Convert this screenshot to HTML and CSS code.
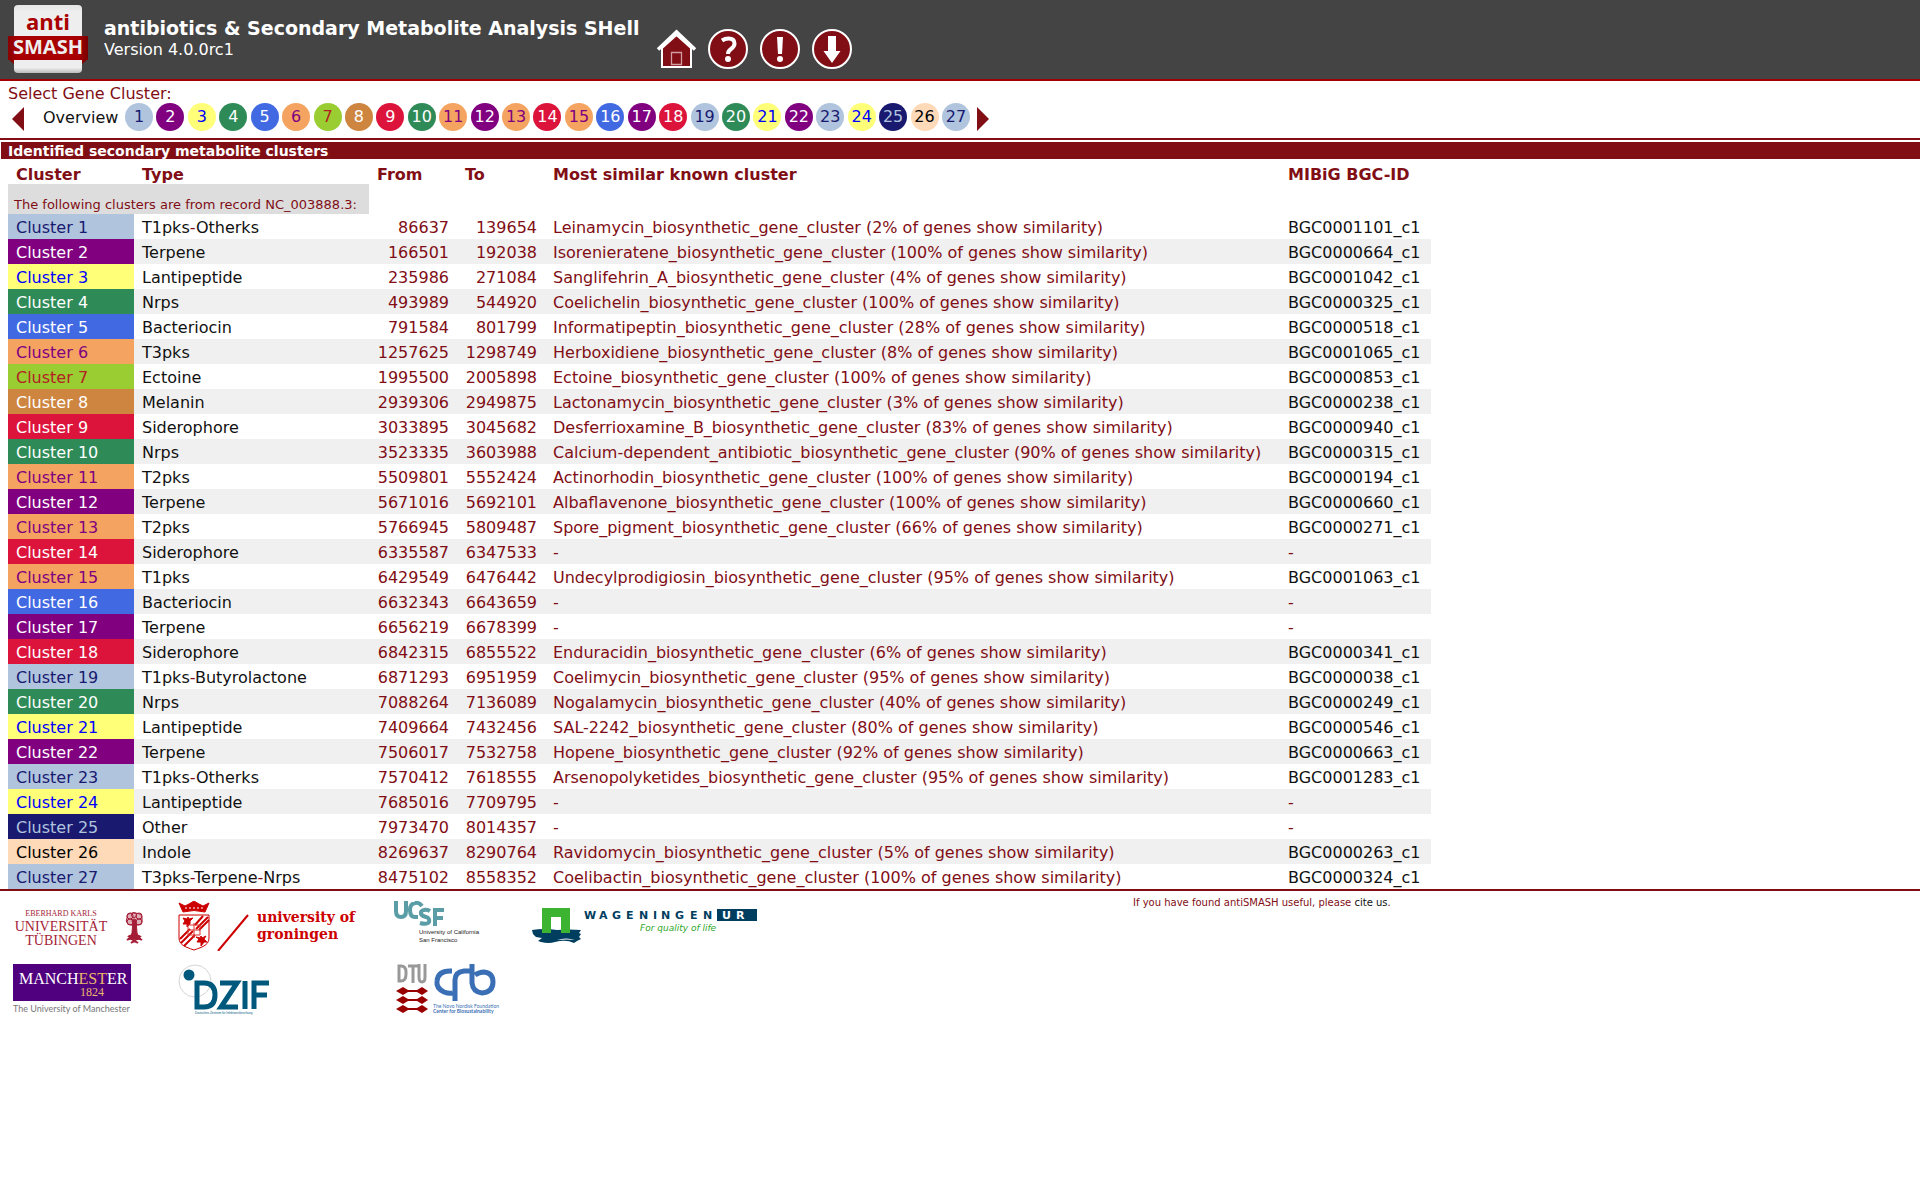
FILE: index.html
```html
<!DOCTYPE html>
<html lang="en">
<head>
<meta charset="utf-8">
<title>NC_003888.3 - antiSMASH results</title>
<link rel="stylesheet" href="styles.css">
</head>
<body>
<header class="top">
  <a class="logo" href="#home" aria-label="antiSMASH">
    <svg width="80" height="70" viewBox="0 0 80 70">
      <defs>
        <linearGradient id="card" x1="0" y1="0" x2="0" y2="1"><stop offset="0" stop-color="#e4e4e4"/><stop offset=".1" stop-color="#eee"/><stop offset=".92" stop-color="#eee"/><stop offset="1" stop-color="#bbb"/></linearGradient>
        <linearGradient id="band" x1="0" y1="0" x2="1" y2="0"><stop offset="0" stop-color="#800"/><stop offset=".12" stop-color="#a80000"/><stop offset=".88" stop-color="#a80000"/><stop offset="1" stop-color="#700"/></linearGradient>
      </defs>
      <path d="M0 54h80l-6 5H6z" fill="#800"/>
      <rect x="6" y="0" width="68" height="68" rx="4" fill="url(#card)"/>
      <rect x="0" y="31" width="80" height="24" fill="url(#band)"/>
      <text class="logo-anti" x="40" y="25" text-anchor="middle">anti</text>
      <text class="logo-smash" x="40" y="49" text-anchor="middle">SMASH</text>
    </svg>
  </a>
  <div class="titles">
    <h1>antibiotics &amp; Secondary Metabolite Analysis SHell</h1>
    <p>Version 4.0.0rc1</p>
  </div>
  <nav class="icons" aria-label="Site">
    <a href="#home" aria-label="Home"><svg width="40" height="40" viewBox="0 0 40 40"><path d="M6 19v19h29V19L20.500 6z" fill="#810e15" stroke="#fff" stroke-width="2"/><path d="M2 20.500L20.500 3 39 20.500" fill="none" stroke="#fff" stroke-width="3.500"/><path d="M15.500 23.500h10v12h-10z" fill="none" stroke="#d09ea1" stroke-width="1.300"/></svg></a>
    <a href="#help" aria-label="Help"><svg width="40" height="40" viewBox="0 0 40 40"><circle cx="20" cy="20" r="19" fill="#810e15" stroke="#fff" stroke-width="2"/><path d="M14 11.500q3-2 6.500-2 6 0 6 5 0 3-3.500 5.500-3 2-3 5" fill="none" stroke="#fff" stroke-width="4"/><circle cx="20" cy="30" r="3" fill="#fff"/></svg></a>
    <a href="#about" aria-label="About"><svg width="40" height="40" viewBox="0 0 40 40"><circle cx="20" cy="20" r="19" fill="#810e15" stroke="#fff" stroke-width="2"/><path d="M17 8h6l-1 17h-4z" fill="#fff"/><circle cx="20" cy="30" r="3" fill="#fff"/></svg></a>
    <a href="#download" aria-label="Download"><svg width="40" height="40" viewBox="0 0 40 40"><circle cx="20" cy="20" r="19" fill="#810e15" stroke="#fff" stroke-width="2"/><path d="M16 7h8v15h4.500L20 34l-8.500-12H16z" fill="#fff"/></svg></a>
  </nav>
</header>

<nav class="picker" aria-label="Gene clusters">
  <div class="picker-label">Select Gene Cluster:</div>
  <div class="picker-row">
    <a class="arrow" href="#prev" aria-label="Previous"><svg width="12" height="24" viewBox="0 0 12 24"><path d="M12 0v24L0 12z" fill="#810e15"/></svg></a>
    <a class="overview" href="#overview">Overview</a>
    <div class="dots">
      <a class="dot hybrid" href="#c1">1</a><a class="dot terpene" href="#c2">2</a><a class="dot lanti" href="#c3">3</a><a class="dot nrps" href="#c4">4</a><a class="dot bact" href="#c5">5</a><a class="dot pks" href="#c6">6</a><a class="dot ectoine" href="#c7">7</a><a class="dot melanin" href="#c8">8</a><a class="dot sidero" href="#c9">9</a><a class="dot nrps" href="#c10">10</a><a class="dot pks" href="#c11">11</a><a class="dot terpene" href="#c12">12</a><a class="dot pks" href="#c13">13</a><a class="dot sidero" href="#c14">14</a><a class="dot pks" href="#c15">15</a><a class="dot bact" href="#c16">16</a><a class="dot terpene" href="#c17">17</a><a class="dot sidero" href="#c18">18</a><a class="dot hybrid" href="#c19">19</a><a class="dot nrps" href="#c20">20</a><a class="dot lanti" href="#c21">21</a><a class="dot terpene" href="#c22">22</a><a class="dot hybrid" href="#c23">23</a><a class="dot lanti" href="#c24">24</a><a class="dot other" href="#c25">25</a><a class="dot indole" href="#c26">26</a><a class="dot hybrid" href="#c27">27</a>
    </div>
    <a class="arrow" href="#next" aria-label="Next"><svg width="12" height="24" viewBox="0 0 12 24"><path d="M0 0v24l12-12z" fill="#810e15"/></svg></a>
  </div>
</nav>

<main>
<h2 class="band">Identified secondary metabolite clusters</h2>
<table class="clusters">
<colgroup><col class="w-cluster"><col class="w-type"><col class="w-num"><col class="w-num"><col class="w-known"><col class="w-id"></colgroup>
<thead><tr><th>Cluster</th><th>Type</th><th>From</th><th>To</th><th>Most similar known cluster</th><th>MIBiG BGC-ID</th></tr></thead>
<tbody>
<tr class="record"><td colspan="2">The following clusters are from record NC_003888.3:</td></tr>
<tr><td class="hybrid"><a href="#c1">Cluster 1</a></td><td><a href="#t">T1pks</a>-<a href="#t">Otherks</a></td><td>86637</td><td>139654</td><td>Leinamycin_biosynthetic_gene_cluster (2% of genes show similarity)</td><td><a href="#m">BGC0001101_c1</a></td></tr>
<tr><td class="terpene"><a href="#c2">Cluster 2</a></td><td><a href="#t">Terpene</a></td><td>166501</td><td>192038</td><td>Isorenieratene_biosynthetic_gene_cluster (100% of genes show similarity)</td><td><a href="#m">BGC0000664_c1</a></td></tr>
<tr><td class="lanti"><a href="#c3">Cluster 3</a></td><td><a href="#t">Lantipeptide</a></td><td>235986</td><td>271084</td><td>Sanglifehrin_A_biosynthetic_gene_cluster (4% of genes show similarity)</td><td><a href="#m">BGC0001042_c1</a></td></tr>
<tr><td class="nrps"><a href="#c4">Cluster 4</a></td><td><a href="#t">Nrps</a></td><td>493989</td><td>544920</td><td>Coelichelin_biosynthetic_gene_cluster (100% of genes show similarity)</td><td><a href="#m">BGC0000325_c1</a></td></tr>
<tr><td class="bact"><a href="#c5">Cluster 5</a></td><td><a href="#t">Bacteriocin</a></td><td>791584</td><td>801799</td><td>Informatipeptin_biosynthetic_gene_cluster (28% of genes show similarity)</td><td><a href="#m">BGC0000518_c1</a></td></tr>
<tr><td class="pks"><a href="#c6">Cluster 6</a></td><td><a href="#t">T3pks</a></td><td>1257625</td><td>1298749</td><td>Herboxidiene_biosynthetic_gene_cluster (8% of genes show similarity)</td><td><a href="#m">BGC0001065_c1</a></td></tr>
<tr><td class="ectoine"><a href="#c7">Cluster 7</a></td><td><a href="#t">Ectoine</a></td><td>1995500</td><td>2005898</td><td>Ectoine_biosynthetic_gene_cluster (100% of genes show similarity)</td><td><a href="#m">BGC0000853_c1</a></td></tr>
<tr><td class="melanin"><a href="#c8">Cluster 8</a></td><td><a href="#t">Melanin</a></td><td>2939306</td><td>2949875</td><td>Lactonamycin_biosynthetic_gene_cluster (3% of genes show similarity)</td><td><a href="#m">BGC0000238_c1</a></td></tr>
<tr><td class="sidero"><a href="#c9">Cluster 9</a></td><td><a href="#t">Siderophore</a></td><td>3033895</td><td>3045682</td><td>Desferrioxamine_B_biosynthetic_gene_cluster (83% of genes show similarity)</td><td><a href="#m">BGC0000940_c1</a></td></tr>
<tr><td class="nrps"><a href="#c10">Cluster 10</a></td><td><a href="#t">Nrps</a></td><td>3523335</td><td>3603988</td><td>Calcium-dependent_antibiotic_biosynthetic_gene_cluster (90% of genes show similarity)</td><td><a href="#m">BGC0000315_c1</a></td></tr>
<tr><td class="pks"><a href="#c11">Cluster 11</a></td><td><a href="#t">T2pks</a></td><td>5509801</td><td>5552424</td><td>Actinorhodin_biosynthetic_gene_cluster (100% of genes show similarity)</td><td><a href="#m">BGC0000194_c1</a></td></tr>
<tr><td class="terpene"><a href="#c12">Cluster 12</a></td><td><a href="#t">Terpene</a></td><td>5671016</td><td>5692101</td><td>Albaflavenone_biosynthetic_gene_cluster (100% of genes show similarity)</td><td><a href="#m">BGC0000660_c1</a></td></tr>
<tr><td class="pks"><a href="#c13">Cluster 13</a></td><td><a href="#t">T2pks</a></td><td>5766945</td><td>5809487</td><td>Spore_pigment_biosynthetic_gene_cluster (66% of genes show similarity)</td><td><a href="#m">BGC0000271_c1</a></td></tr>
<tr><td class="sidero"><a href="#c14">Cluster 14</a></td><td><a href="#t">Siderophore</a></td><td>6335587</td><td>6347533</td><td>-</td><td>-</td></tr>
<tr><td class="pks"><a href="#c15">Cluster 15</a></td><td><a href="#t">T1pks</a></td><td>6429549</td><td>6476442</td><td>Undecylprodigiosin_biosynthetic_gene_cluster (95% of genes show similarity)</td><td><a href="#m">BGC0001063_c1</a></td></tr>
<tr><td class="bact"><a href="#c16">Cluster 16</a></td><td><a href="#t">Bacteriocin</a></td><td>6632343</td><td>6643659</td><td>-</td><td>-</td></tr>
<tr><td class="terpene"><a href="#c17">Cluster 17</a></td><td><a href="#t">Terpene</a></td><td>6656219</td><td>6678399</td><td>-</td><td>-</td></tr>
<tr><td class="sidero"><a href="#c18">Cluster 18</a></td><td><a href="#t">Siderophore</a></td><td>6842315</td><td>6855522</td><td>Enduracidin_biosynthetic_gene_cluster (6% of genes show similarity)</td><td><a href="#m">BGC0000341_c1</a></td></tr>
<tr><td class="hybrid"><a href="#c19">Cluster 19</a></td><td><a href="#t">T1pks</a>-<a href="#t">Butyrolactone</a></td><td>6871293</td><td>6951959</td><td>Coelimycin_biosynthetic_gene_cluster (95% of genes show similarity)</td><td><a href="#m">BGC0000038_c1</a></td></tr>
<tr><td class="nrps"><a href="#c20">Cluster 20</a></td><td><a href="#t">Nrps</a></td><td>7088264</td><td>7136089</td><td>Nogalamycin_biosynthetic_gene_cluster (40% of genes show similarity)</td><td><a href="#m">BGC0000249_c1</a></td></tr>
<tr><td class="lanti"><a href="#c21">Cluster 21</a></td><td><a href="#t">Lantipeptide</a></td><td>7409664</td><td>7432456</td><td>SAL-2242_biosynthetic_gene_cluster (80% of genes show similarity)</td><td><a href="#m">BGC0000546_c1</a></td></tr>
<tr><td class="terpene"><a href="#c22">Cluster 22</a></td><td><a href="#t">Terpene</a></td><td>7506017</td><td>7532758</td><td>Hopene_biosynthetic_gene_cluster (92% of genes show similarity)</td><td><a href="#m">BGC0000663_c1</a></td></tr>
<tr><td class="hybrid"><a href="#c23">Cluster 23</a></td><td><a href="#t">T1pks</a>-<a href="#t">Otherks</a></td><td>7570412</td><td>7618555</td><td>Arsenopolyketides_biosynthetic_gene_cluster (95% of genes show similarity)</td><td><a href="#m">BGC0001283_c1</a></td></tr>
<tr><td class="lanti"><a href="#c24">Cluster 24</a></td><td><a href="#t">Lantipeptide</a></td><td>7685016</td><td>7709795</td><td>-</td><td>-</td></tr>
<tr><td class="other"><a href="#c25">Cluster 25</a></td><td><a href="#t">Other</a></td><td>7973470</td><td>8014357</td><td>-</td><td>-</td></tr>
<tr><td class="indole"><a href="#c26">Cluster 26</a></td><td><a href="#t">Indole</a></td><td>8269637</td><td>8290764</td><td>Ravidomycin_biosynthetic_gene_cluster (5% of genes show similarity)</td><td><a href="#m">BGC0000263_c1</a></td></tr>
<tr><td class="hybrid"><a href="#c27">Cluster 27</a></td><td><a href="#t">T3pks</a>-<a href="#t">Terpene</a>-<a href="#t">Nrps</a></td><td>8475102</td><td>8558352</td><td>Coelibactin_biosynthetic_gene_cluster (100% of genes show similarity)</td><td><a href="#m">BGC0000324_c1</a></td></tr>
</tbody>
</table>
</main>

<footer class="foot">
  <div class="logos">
    <svg width="130" height="50" viewBox="0 0 130 50" role="img" aria-label="Universität Tübingen">
      <g fill="#a51e37" font-family="Liberation Serif, serif" text-anchor="middle">
        <text x="48" y="15" font-size="8">EBERHARD KARLS</text>
        <text x="48" y="30" font-size="14">UNIVERSITÄT</text>
        <text x="48" y="44" font-size="14">TÜBINGEN</text>
      </g>
      <g fill="none" stroke="#a51e37"><path d="M120 19h3l1 13q1 4 4 6h-13q3-2 4-6z" fill="#a51e37"/><path d="M114 17q-1-5 7-5 9 0 8 6 1 5-4 6-7 1-10-1-3-3-1-6z" fill="#a51e37" fill-opacity=".35"/><circle cx="117" cy="15" r="3"/><circle cx="126" cy="15" r="3"/><circle cx="121" cy="14" r="2.500"/><circle cx="117" cy="21" r="3"/><circle cx="126" cy="21" r="3"/><circle cx="121" cy="20" r="2"/><path d="M115 36q3-3 6 1 3-4 7-1M114 39q4-3 7 1 4-4 8-1M118 42q3-3 7 0" stroke-width="2"/></g>
    </svg>
    <svg width="182" height="50" viewBox="0 0 182 50" role="img" aria-label="University of Groningen">
      <g fill="none" stroke="#c00"><path d="M1 14h30v23q0 6-7 9-5 2-8 3-3-1-8-3-7-3-7-9z"/><path d="M5 11L1 2l6 3 4-2 5-3 5 3 4 2 6-3-4 9q-11-3-22 0z" fill="#c00"/><path d="M7 7h18" stroke="#fff" stroke-dasharray="2 2"/><path d="M18 28l12-12M21 29l10-10M17 24l8-9M3 42l12-12M6 45l11-11M2 38l10-10" stroke-width="2"/><path d="M5 17l2 3-2 3h4v3l3-3v-3l3-3-4 1-1-2-1 2zM18 36l3 2-2 3h4v4l3-4h3l-3-3 2-3-4 2-1-2-1 2z" fill="#c00"/><path d="M10 24h12v10H10zM16 22v15M10 29h12" stroke="#d33"/><path d="M40 50L70 14" stroke-width="2"/></g>
      <g fill="#c00" font-family="DejaVu Serif, serif" font-weight="bold" font-size="14"><text x="79" y="21">university of</text><text x="79" y="38">groningen</text></g>
    </svg>
    <svg width="100" height="50" viewBox="0 0 100 50" role="img" aria-label="University of California San Francisco">
      <g fill="none" stroke="#5b9da6" stroke-width="4"><path d="M2 0v10q0 6 5 6t5-6V0M28 5q-3-4-7-3-5 1-5 7 0 7 5 7h3"/><path d="M36 10q-3-2-6-1-4 1-3 4 1 2 5 3t3 5q-2 3-9 1M41 25V9h9M41 17h8"/></g>
      <g fill="#222" font-family="Liberation Sans, sans-serif" font-size="6"><text x="25" y="33">University of California</text><text x="25" y="41">San Francisco</text></g>
    </svg>
    <svg width="228" height="50" viewBox="0 0 228 50" role="img" aria-label="Wageningen UR">
      <path d="M1 29q12-2 25 0 12-1 24 0l-2 3 2 1-2 3 2 2-4 2-3 2q-8-4-19-1-6 2-14 0l-3-1 4-3-6-1-3-3z" fill="#003e5f"/><path d="M26 39q9-3 18 0-8-1-18 0" fill="#fff"/>
      <path d="M11 7h28v25h-9V16H20v16h-9z" fill="#3cb432"/>
      <g font-family="DejaVu Sans, sans-serif" font-weight="bold" font-size="11" fill="#003e5f"><text x="53 68 81 95 108 122 130 144 159 172" y="18">WAGENINGEN</text><path d="M186 8h40v12h-40z"/><text x="191 205" y="18" fill="#fff">UR</text></g>
      <text x="109" y="30" font-family="DejaVu Sans, sans-serif" font-style="italic" font-size="9" fill="#2fa82a">For quality of life</text>
    </svg>
    <svg width="130" height="50" viewBox="0 0 130 50" role="img" aria-label="The University of Manchester">
      <path d="M0 0h118v37H0z" fill="#50007f"/>
      <g font-family="Liberation Serif, serif"><text x="6" y="20" font-size="16" fill="#fff">MANCH<tspan fill="#e8b96a">EST</tspan>ER</text><text x="67" y="32" font-size="12" fill="#e8b96a">1824</text></g>
      <text x="0" y="48" font-family="Lato, sans-serif" font-size="9" fill="#777">The University of Manchester</text>
    </svg>
    <svg width="100" height="52" viewBox="0 0 100 52" role="img" aria-label="DZIF">
      <circle cx="17" cy="17" r="16" fill="none" stroke="#d5d5d5"/><circle cx="11" cy="11" r="5.500" fill="#00587c"/>
      <path d="M19 19h7q11 0 11 12t-11 12h-7zM42 19h17L43 43h17M67 17v28M76 45V19h15M76 31h13" fill="none" stroke="#00587c" stroke-width="5"/>
      <text x="17" y="50" font-family="Liberation Sans, sans-serif" font-size="3" fill="#00587c">Deutsches Zentrum für Infektionsforschung</text>
    </svg>
    <svg width="108" height="52" viewBox="0 0 108 52" role="img" aria-label="DTU, Center for Biosustainability">
      <path d="M5 2v15h2q5 0 5-7V8q0-6-5-6zM14 2h10M19 2v17M25 0v13q0 5 3 5t3-5V0" fill="none" stroke="#999" stroke-width="3"/>
      <g fill="#900"><path id="d" d="M2 27l7-4 5 3h9l5-3 6 4-6 4-5-3h-9l-5 3z"/><use href="#d" y="9"/><use href="#d" y="18"/></g>
      <g fill="none" stroke="#3a6fb5" stroke-width="5"><path d="M59 29q-4 1-9-1-8-4-7-11 1-10 13-10h2"/><path d="M61 37V16q0-8 9-9h7"/><path d="M78 0v19q1 9 10 10 11-1 11-11 0-9-9-10-5 0-9 3"/></g>
      <g fill="#3a6fb5" font-family="Lato, sans-serif" font-size="5"><text x="39" y="44">The Novo Nordisk Foundation</text><text x="39" y="49" font-weight="bold">Center for Biosustainability</text></g>
    </svg>
  </div>
  <p class="cite">If you have found antiSMASH useful, please <a href="#cite">cite us</a>.</p>
</footer>
</body>
</html>
```
FILE: styles.css
```css
body { margin: 0; background: #fff; color: #810e15; font: 16px/19px Verdana, "DejaVu Sans", sans-serif; }
a { color: #111; text-decoration: none; }
h1, h2, p { margin: 0; }
svg { display: block; }

.top { display: grid; grid-template-columns: 96px 552px auto; justify-content: start; min-height: 79px; padding-left: 8px; background: #444; color: #fff; border-bottom: 2px solid #a00000; }
.logo { padding-top: 5px; }
.logo-anti, .logo-smash { font-family: "Open Sans", sans-serif; font-weight: bold; }
.logo-anti { font-size: 22px; fill: #a80000; }
.logo-smash { font-size: 20px; fill: #eee; }
.titles { padding-top: 17px; white-space: nowrap; }
.titles h1 { font-size: 19px; line-height: 22px; }
.titles p { line-height: 22px; }
.icons { display: flex; gap: 12px; padding-top: 29px; }

.picker { padding: 4px 8px 7px; border-bottom: 2px solid #810e15; }
.picker-label { line-height: 18px; }
.picker-row { display: flex; align-items: center; padding-left: 4px; white-space: nowrap; }
.arrow { padding-top: 4px; }
.overview { width: 82px; padding-left: 19px; }
.dots { display: flex; justify-content: space-between; width: 845px; margin-right: 7px; }
.dot { width: 28px; border-radius: 50%; line-height: 28px; text-align: center; }

.band { margin: 2px 0 0 1px; padding: 1px 0 0 7px; background: #810e15; color: #fff; font-size: 14px; line-height: 16px; }

.clusters { margin-left: 8px; border-collapse: collapse; table-layout: fixed; width: 1423px; white-space: nowrap; }
.w-cluster { width: 126px; }
.w-type { width: 235px; }
.w-num { width: 88px; }
.w-known { width: 735px; }
.w-id { width: 151px; }
.clusters th, .clusters td { padding: 4px 8px 2px; text-align: left; }
.clusters th { padding: 7px 8px 0; line-height: 18px; }
.clusters tbody td:nth-child(3), .clusters tbody td:nth-child(4) { text-align: right; }
.clusters tbody tr:nth-child(odd):not(.record) { background: #f0f0f0; }
.clusters .record td { padding: 13px 6px 1px; background: #ddd; font-size: 13px; line-height: 16px; }

.hybrid { background: #b0c4de; color: #191970; }
.terpene { background: #800080; color: #fff; }
.lanti { background: #ffff78; color: #00f; }
.nrps { background: #2e8b57; color: #fff; }
.bact { background: #4169e1; color: #fff; }
.pks { background: #f4a460; color: #800080; }
.ectoine { background: #9acd32; color: #b22222; }
.melanin { background: #cd853f; color: #fff; }
.sidero { background: #dc143c; color: #fff; }
.other { background: #191970; color: #b0c4de; }
.indole { background: #ffdab9; color: #000; }
.clusters td[class] a { color: inherit; }

.foot { display: flex; border-top: 2px solid #810e15; padding: 5px 0 0 13px; }
.logos { display: grid; grid-template-columns: 165px 216px 137px 602px; row-gap: 13px; padding-top: 5px; }
.cite { font-size: 10px; line-height: 13px; white-space: nowrap; }
```
